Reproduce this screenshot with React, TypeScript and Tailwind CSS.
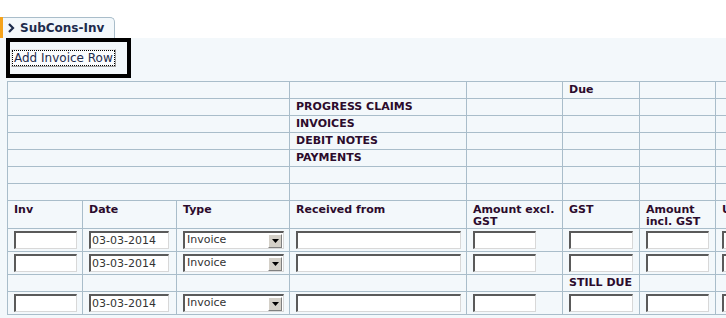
import React from 'react';

const font = { fontFamily: '"DejaVu Sans", Verdana, sans-serif' };

const cell = 'border border-[#a9bdca] px-[6px]';
const textCell = `${cell} py-[1px] align-middle leading-[14px]`;
const inputCell = `${cell} pt-[2px] pb-[2px] align-top`;
const headCell = `${cell} pt-[3px] pb-0 align-top leading-[12px]`;

const TextBox: React.FC<{ w: string; value?: string }> = ({ w, value }) => (
  <div
    className={`${w} h-[18px] bg-white border-t-2 border-l-2 border-b border-r border-t-[#5a5a5a] border-l-[#5a5a5a] border-b-[#d8d8d8] border-r-[#d8d8d8] text-[11px] font-normal leading-[15px] pl-[1px] text-[#333] overflow-hidden whitespace-nowrap`}
  >
    {value}
  </div>
);

const TypeSelect: React.FC = () => (
  <div className="w-[101px] h-[18px] bg-white border-t-2 border-l-2 border-b border-r border-t-[#5a5a5a] border-l-[#5a5a5a] border-b-[#d8d8d8] border-r-[#d8d8d8] flex items-center justify-between pl-[2px] pr-[1px]">
    <span className="text-[11px] font-normal text-[#333]">Invoice</span>
    <span className="w-[14px] h-[14px] bg-[#d4d0c8] border border-t-white border-l-white border-b-[#808080] border-r-[#808080] flex items-center justify-center">
      <svg width="7" height="4" viewBox="0 0 7 4">
        <polygon points="0,0 7,0 3.5,4" fill="#000" />
      </svg>
    </span>
  </div>
);

const InputRow: React.FC = () => (
  <tr>
    <td className={inputCell}><TextBox w="w-[63px]" /></td>
    <td className={inputCell}><TextBox w="w-[80px]" value="03-03-2014" /></td>
    <td className={inputCell}><TypeSelect /></td>
    <td className={inputCell}><TextBox w="w-[165px]" /></td>
    <td className={inputCell}><TextBox w="w-[63px]" /></td>
    <td className={inputCell}><TextBox w="w-[64px]" /></td>
    <td className={inputCell}><TextBox w="w-[63px]" /></td>
    <td className={inputCell}><TextBox w="w-[63px]" /></td>
    <td className={inputCell}><TextBox w="w-[63px]" /></td>
  </tr>
);

const SummaryRow: React.FC<{ label?: string; due?: string }> = ({ label, due }) => (
  <tr>
    <td className={textCell} colSpan={3}>&nbsp;</td>
    <td className={textCell}>{label}</td>
    <td className={textCell}></td>
    <td className={textCell}>{due}</td>
    <td className={textCell}></td>
    <td className={textCell}></td>
    <td className={textCell}></td>
  </tr>
);

export default function App() {
  const summary = ['', 'PROGRESS CLAIMS', 'INVOICES', 'DEBIT NOTES', 'PAYMENTS', '', ''];

  return (
    <div className="w-[726px] h-[318px] overflow-hidden bg-white" style={font}>
      {/* tab */}
      <div className="flex mt-[17px] h-[21px]">
        <div className="w-[3px] bg-[#f5a31b]"></div>
        <div className="w-[112px] bg-[#f3f8fb] border-t border-r border-[#a9bdca] rounded-tr-[5px] flex items-center pl-[5px] gap-[5px]">
          <svg width="7" height="10" viewBox="0 0 7 10">
            <polyline points="1,1 5,5 1,9" fill="none" stroke="#1d2b4c" strokeWidth="2.2" />
          </svg>
          <span className="text-[12px] font-bold text-[#1d2b4c]">SubCons-Inv</span>
        </div>
      </div>

      {/* panel */}
      <div className="bg-[#f3f8fb] h-[280px]">
        <div className="ml-[6px] w-[125px] h-[40px] border-4 border-black bg-[#f3f8fb] pl-[1px] pt-[3px]">
          <button className="h-[18px] px-[2px] bg-[#fafcfd] border border-[#a0a0a0] border-l-[#e8e8e8] border-t-[#e8e8e8] outline-1 outline-dotted outline-black -outline-offset-2 text-[12px] text-[#1d2b4c] leading-[14px] whitespace-nowrap">
            Add Invoice Row
          </button>
        </div>

        <div className="ml-[7px] mt-[3px]">
          <table className="border-collapse table-fixed w-[868px] text-[11px] text-[#2c0b2c] font-bold">
            <colgroup>
              <col className="w-[75px]" />
              <col className="w-[94px]" />
              <col className="w-[113px]" />
              <col className="w-[177px]" />
              <col className="w-[96px]" />
              <col className="w-[77px]" />
              <col className="w-[76px]" />
              <col className="w-[80px]" />
              <col className="w-[80px]" />
            </colgroup>
            <tbody>
              {summary.map((label, i) => (
                <SummaryRow key={i} label={label} due={i === 0 ? 'Due' : ''} />
              ))}
              <tr>
                <td className={headCell}>Inv<br />&nbsp;</td>
                <td className={headCell}>Date</td>
                <td className={headCell}>Type</td>
                <td className={headCell}>Received from</td>
                <td className={headCell}>Amount excl. GST</td>
                <td className={headCell}>GST</td>
                <td className={headCell}>Amount incl. GST</td>
                <td className={headCell}>Unit Level</td>
                <td className={headCell}></td>
              </tr>
              <InputRow />
              <InputRow />
              <tr>
                <td className={textCell}>&nbsp;</td>
                <td className={textCell}></td>
                <td className={textCell}></td>
                <td className={textCell}></td>
                <td className={textCell}></td>
                <td className={textCell}>STILL DUE</td>
                <td className={textCell}></td>
                <td className={textCell}></td>
                <td className={textCell}></td>
              </tr>
              <InputRow />
            </tbody>
          </table>
        </div>
      </div>
    </div>
  );
}
